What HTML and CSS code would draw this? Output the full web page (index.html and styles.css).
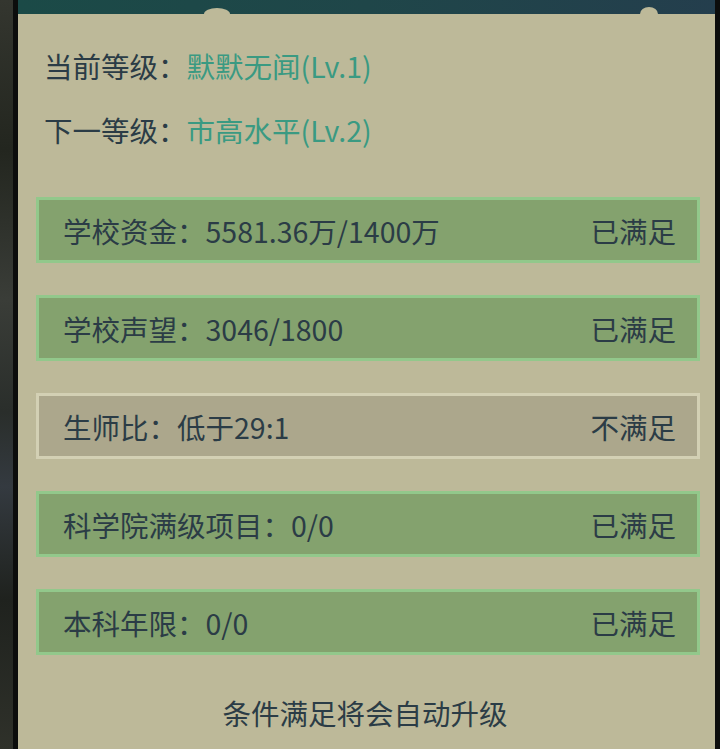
FILE: index.html
```html
<!DOCTYPE html>
<html lang="zh-CN">
<head>
<meta charset="utf-8">
<title>等级</title>
<link rel="stylesheet" href="styles.css">
</head>
<body>
<div class="frame">
  <div class="scene"></div>
  <div class="edge"></div>
  <div class="panel">
    <div class="topbar">
      <span class="bump bump-a"></span>
      <span class="bump bump-b"></span>
    </div>
    <div class="content">
      <div class="level">当前等级：<span class="hl">默默无闻(Lv.1)</span></div>
      <div class="level second">下一等级：<span class="hl">市高水平(Lv.2)</span></div>
      <div class="rows">
        <div class="row ok"><span>学校资金：5581.36万/1400万</span><span>已满足</span></div>
        <div class="row ok"><span>学校声望：3046/1800</span><span>已满足</span></div>
        <div class="row no"><span>生师比：低于29:1</span><span>不满足</span></div>
        <div class="row ok"><span>科学院满级项目：0/0</span><span>已满足</span></div>
        <div class="row ok"><span>本科年限：0/0</span><span>已满足</span></div>
      </div>
      <div class="footer">条件满足将会自动升级</div>
    </div>
  </div>
  <div class="edge"></div>
</div>
</body>
</html>
```
FILE: styles.css
```css
html, body {
  margin: 0;
  padding: 0;
  background: #1b1d1a;
}
body {
  width: 720px;
  height: 749px;
  overflow: hidden;
  font-family: "Noto Sans CJK SC", "Noto Sans", sans-serif;
  color: #2b3c46;
}
.frame {
  display: flex;
  height: 749px;
}
.scene {
  width: 13px;
  background: linear-gradient(180deg, #34362f 0%, #23261f 20%, #3a3d38 40%, #2a2e2b 55%, #343a40 65%, #1f221e 80%, #2f312a 100%);
}
.edge {
  width: 5px;
  background: #0c0d0c;
}
.panel {
  flex: 1;
  background: #bdb999;
  display: flex;
  flex-direction: column;
}
.topbar {
  position: relative;
  height: 14px;
  background: linear-gradient(90deg, #1b4a47 0%, #1f4649 50%, #243e4d 100%);
}
.bump {
  position: absolute;
  bottom: 0;
  width: 26px;
  height: 6px;
  background: #bdb999;
  border-radius: 50% 50% 0 0 / 100% 100% 0 0;
}
.bump-a { left: 186px; }
.bump-b { left: 622px; width: 18px; height: 7px; }
.content {
  padding: 32px 15px 0 18px;
  display: flex;
  flex-direction: column;
}
.level {
  font-size: 28.5px;
  line-height: 40px;
  height: 40px;
  padding-left: 8px;
  white-space: nowrap;
}
.level.second {
  margin-top: 24px;
}
.hl {
  color: #3a9a82;
}
.rows {
  margin-top: 47px;
  display: flex;
  flex-direction: column;
  gap: 32px;
}
.row {
  height: 66px;
  box-sizing: border-box;
  display: flex;
  align-items: center;
  justify-content: space-between;
  padding: 0 21px 0 24px;
  font-size: 28.5px;
  white-space: nowrap;
}
.row.ok {
  background: #84a26e;
  border: 3px solid #92c88b;
}
.row.no {
  background: #aca78c;
  border: 3px solid #d3d0b4;
}
.footer {
  margin-top: 38px;
  font-size: 28.5px;
  line-height: 40px;
  text-align: center;
  padding-right: 6px;
}
```
